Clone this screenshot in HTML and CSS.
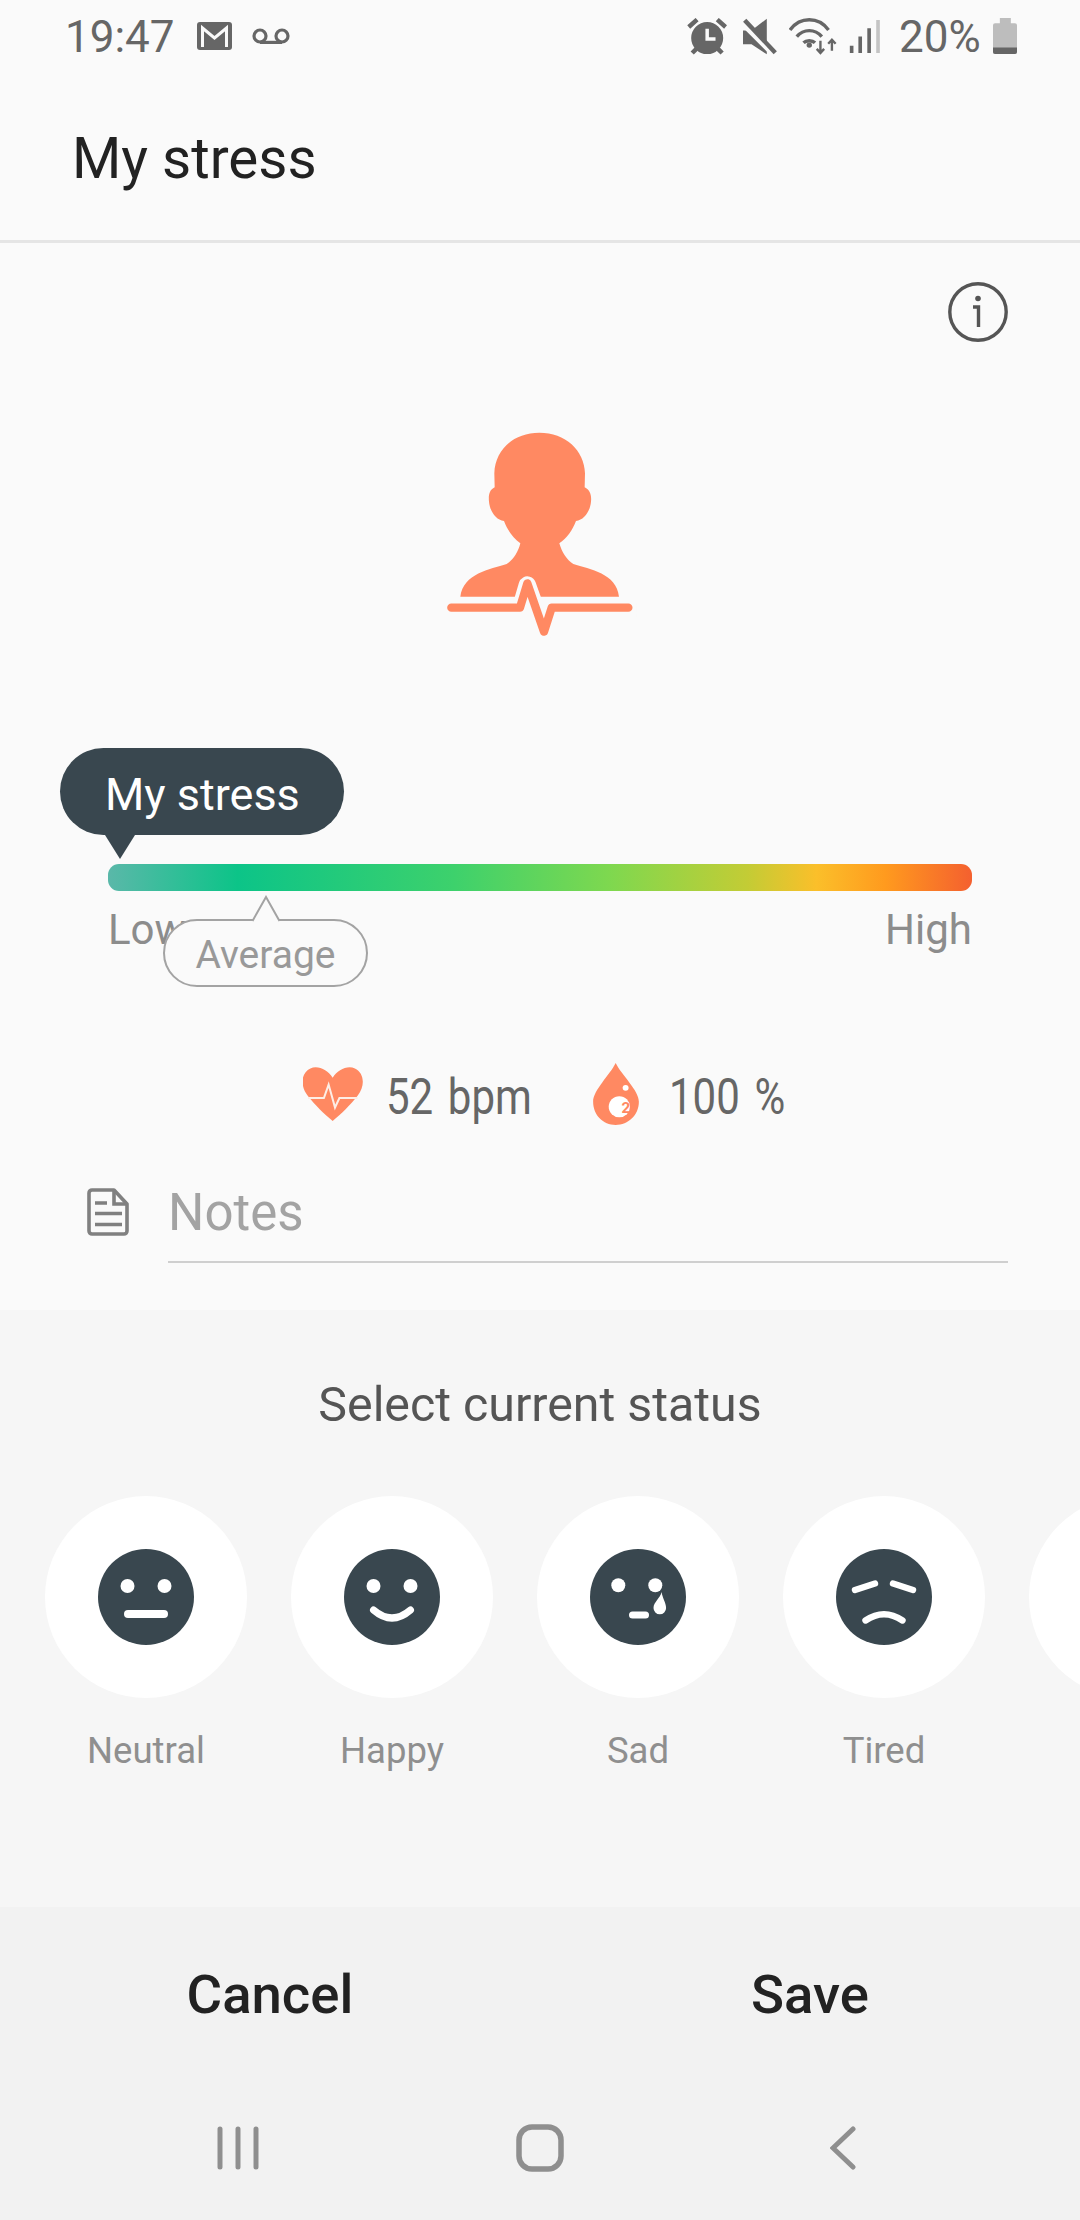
FILE: index.html
```html
<!DOCTYPE html>
<html lang="en">
<head>
<meta charset="utf-8">
<title>My stress</title>
<link rel="stylesheet" href="styles.css">
</head>
<body>
<div class="app">
  <header class="status">
    <span class="clock">19:47</span>
    <svg class="ic-gmail" viewBox="0 0 35 28"><rect width="35" height="28" rx="3" fill="#666"/><path d="M5.5 25V6l12 10 12-10v19" fill="none" stroke="#fafafa" stroke-width="3"/></svg>
    <svg class="ic-vm" viewBox="0 0 38 16"><circle cx="8" cy="8" r="6" fill="none" stroke="#666" stroke-width="3.2"/><circle cx="30" cy="8" r="6" fill="none" stroke="#666" stroke-width="3.2"/><path d="M8 14.4h22" stroke="#666" stroke-width="3.2"/></svg>
    <span class="status-gap"></span>
    <svg class="ic-alarm" viewBox="140 55 115 105"><circle cx="198" cy="112" r="46" fill="#666"/><path d="M145 80l24-21M251 80l-24-21M155 155l12-12M241 155l-12-12" stroke="#666" stroke-width="13"/><path d="M198 85v30h24" fill="none" stroke="#fafafa" stroke-width="10"/></svg>
    <svg class="ic-mute" viewBox="305 55 100 105"><path d="M305 90h25l45-35v105l-45-30h-25z" fill="#666"/><path d="M300 67l90 90" stroke="#fafafa" stroke-width="14"/><path d="M310 60l90 95" stroke="#666" stroke-width="13"/></svg>
    <svg class="ic-wifi" viewBox="445 50 145 115"><g fill="none" stroke="#666" stroke-width="10"><path d="M448 88c30-40 84-40 114 0"/><path d="M468 108c20-24 54-24 74 0"/><path d="M488 126c8-8 26-8 34 0"/></g><circle cx="505" cy="133" r="8" fill="#666"/><path d="M538 120v35M527 144l11 12 11-12M572 150v-32M561 129l11-12 11 12" fill="none" stroke="#666" stroke-width="7"/></svg>
    <svg class="ic-signal" viewBox="625 60 93 100"><rect x="627" y="138" width="11" height="22" fill="#666"/><rect x="653" y="110" width="11" height="50" fill="#666"/><rect x="680" y="85" width="11" height="75" fill="#666"/><rect x="707" y="60" width="11" height="100" fill="#c4c4c4"/></svg>
    <span class="pct">20%</span>
    <svg class="ic-batt" viewBox="1060 55 70 105"><rect x="1080" y="55" width="32" height="20" fill="#bdbdbd"/><rect x="1060" y="70" width="70" height="90" rx="6" fill="#bdbdbd"/><path d="M1060 141h70v13a6 6 0 0 1-6 6h-58a6 6 0 0 1-6-6z" fill="#666"/></svg>
  </header>

  <div class="appbar"><h1 class="title">My stress</h1></div>

  <main class="main">
    <div class="info-row">
      <svg class="ic-info" viewBox="0 0 60 60"><circle cx="30" cy="30" r="28.2" fill="none" stroke="#555" stroke-width="3.4"/><circle cx="30" cy="16.5" r="2.8" fill="#555"/><path d="M25 25h5.5v20" fill="none" stroke="#555" stroke-width="3.4"/></svg>
    </div>

    <div class="hero">
      <svg class="ic-person" viewBox="0 0 720 720">
        <path d="M358 68C280 68 225 120 223 190l1 42c-16 8-19 23-17 43 3 30 21 55 45 58 10 27 28 52 49 67-6 25-21 50-41 62-50 16-130 28-139 98h476c-7-70-87-82-137-98-20-12-35-37-42-62 22-15 40-40 50-67 24-3 42-28 45-58 2-20-3-35-19-43l1-42C493 120 436 68 358 68z" fill="#ff8962"/>
        <path d="M70 600H300L322 525 372 665 395 600H650" fill="none" stroke="#fafafa" stroke-width="52" stroke-linejoin="round"/>
        <path d="M94 593H300L322 520 372 665 395 593H625" fill="none" stroke="#ff8962" stroke-width="25" stroke-linecap="round" stroke-linejoin="round"/>
      </svg>
    </div>

    <section class="scale">
      <div class="bar"></div>
      <div class="scale-labels"><span>Low</span><span>High</span></div>
      <div class="tip-mine">My stress</div>
      <div class="tip-avg">
        <svg class="tip-avg-arrow" viewBox="0 0 30 28"><path d="M1.500 26L15 2l13.500 24" fill="#fafafa" stroke="#a3a3a3" stroke-width="2"/></svg>
        Average
      </div>
    </section>

    <div class="stats">
      <svg class="ic-heart" viewBox="70 80 178 160"><path d="M158 112c-14-24-44-38-66-28C65 96 60 135 84 165c20 26 50 55 74 75 24-20 54-49 74-75 24-30 19-69-8-81-22-10-52 4-66 28z" fill="#ff8962"/><path d="M85 172h47l14-40 19 68 13-28h54" fill="none" stroke="#fdeee6" stroke-width="6"/></svg>
      <span class="stat-text stat-bpm"><span class="squeeze">52 bpm</span></span>
      <svg class="ic-drop" viewBox="935 68 138 187"><path d="M1003 68c-18 37-68 82-68 117 0 40 30 70 68 70s70-30 70-70c0-35-52-80-70-117z" fill="#ff8962"/><circle cx="1014" cy="200" r="32" fill="#fff"/><circle cx="1033" cy="143" r="9" fill="#fff"/><text class="o2" x="1034" y="218">2</text></svg>
      <span class="stat-text stat-o2"><span class="squeeze">100 %</span></span>
    </div>

    <div class="notes">
      <svg class="ic-note" viewBox="0 0 42 48"><path d="M2 5a3 3 0 0 1 3-3h22l13 14v27a3 3 0 0 1-3 3H5a3 3 0 0 1-3-3z" fill="none" stroke="#808080" stroke-width="3.6" stroke-linejoin="round"/><path d="M27 2v14h13" fill="none" stroke="#808080" stroke-width="3.6"/><path d="M8 15h12M8 25.500h27M8 36.500h27" stroke="#808080" stroke-width="3.4"/></svg>
      <div class="notes-field">Notes</div>
    </div>
  </main>

  <section class="picker">
    <h2 class="picker-title">Select current status</h2>
    <div class="moods">
      <div class="mood">
        <div class="mood-circle"><svg class="face" viewBox="0 0 96 96"><circle cx="48" cy="48" r="48" fill="#39474f"/><circle cx="29.500" cy="37" r="7" fill="#fff"/><circle cx="66.500" cy="37" r="7" fill="#fff"/><path d="M30 65h36" stroke="#fff" stroke-width="8" stroke-linecap="round"/></svg></div>
        <span class="mood-label">Neutral</span>
      </div>
      <div class="mood">
        <div class="mood-circle"><svg class="face" viewBox="0 0 96 96"><circle cx="48" cy="48" r="48" fill="#39474f"/><circle cx="29.500" cy="37" r="7" fill="#fff"/><circle cx="66.500" cy="37" r="7" fill="#fff"/><path d="M29.500 61Q48 77 66.500 61" fill="none" stroke="#fff" stroke-width="7" stroke-linecap="round"/></svg></div>
        <span class="mood-label">Happy</span>
      </div>
      <div class="mood">
        <div class="mood-circle"><svg class="face" viewBox="0 0 96 96"><circle cx="48" cy="48" r="48" fill="#39474f"/><circle cx="28.300" cy="36.300" r="7" fill="#fff"/><circle cx="65.300" cy="36.300" r="7" fill="#fff"/><path d="M71.500 43c-1 6-8 10-8 16a6.300 6.300 0 0 0 12.600 0c0-5-3.600-10-4.600-16z" fill="#fff"/><path d="M42.500 66h13" stroke="#fff" stroke-width="7" stroke-linecap="round"/></svg></div>
        <span class="mood-label">Sad</span>
      </div>
      <div class="mood">
        <div class="mood-circle"><svg class="face" viewBox="0 0 96 96"><circle cx="48" cy="48" r="48" fill="#39474f"/><path d="M19 41l20-6.500M57 34.500l20 6.500M29.500 71.500Q48 59 66.500 71.500" fill="none" stroke="#fff" stroke-width="6.400" stroke-linecap="round"/></svg></div>
        <span class="mood-label">Tired</span>
      </div>
      <div class="mood">
        <div class="mood-circle"></div>
      </div>
    </div>
  </section>

  <footer class="footer">
    <div class="actions">
      <button class="action">Cancel</button>
      <button class="action">Save</button>
    </div>
    <nav class="nav">
      <svg class="nav-recent" viewBox="0 0 42 44"><path d="M3 3v38M21 3v38M39 3v38" stroke="#8f8f8f" stroke-width="5" stroke-linecap="round"/></svg>
      <svg class="nav-home" viewBox="0 0 48 48"><rect x="3" y="3" width="42" height="42" rx="13" fill="none" stroke="#8f8f8f" stroke-width="5.500"/></svg>
      <svg class="nav-back" viewBox="0 0 26 44"><path d="M23 3L3 22l20 19" fill="none" stroke="#8f8f8f" stroke-width="5" stroke-linecap="round"/></svg>
    </nav>
  </footer>
</div>
</body>
</html>
```

FILE: styles.css
```css
* { box-sizing: border-box; }
html, body { margin: 0; padding: 0; }
body { font-family: Roboto, "Noto Sans", sans-serif; background: #fafafa; }

.app { width: 1080px; height: 2220px; display: flex; flex-direction: column; overflow: hidden; background: #fafafa; }

/* status bar */
.status { height: 72px; flex: none; display: flex; align-items: center; padding: 0 63px 0 65px; color: #666; font-size: 44px; }
.status svg { flex: none; display: block; }
.clock { width: 109px; padding-top: 2px; }
.ic-gmail { width: 35px; height: 28px; margin-left: 23px; }
.ic-vm { width: 38px; height: 16px; margin-left: 20px; }
.status-gap { flex: 1; }
.ic-alarm { width: 40px; height: 37px; }
.ic-mute { width: 34px; height: 37px; margin-left: 16px; }
.ic-wifi { width: 49px; height: 39px; margin-left: 12px; }
.ic-signal { width: 31px; height: 33px; margin-left: 11px; }
.pct { margin-left: 19px; font-size: 44px; width: 82px; padding-top: 2px; }
.ic-batt { width: 24px; height: 36px; margin-left: 12px; }

/* app bar */
.appbar { height: 171px; flex: none; display: flex; align-items: center; padding: 6px 0 0 72px; border-bottom: 3px solid #e5e5e5; }
.title { margin: 0; font-size: 56.5px; font-weight: 400; color: #222; line-height: 64px; }

/* main */
.main { height: 1067px; flex: none; display: flex; flex-direction: column; }
.info-row { display: flex; justify-content: flex-end; padding: 39px 72px 0 0; }
.ic-info { width: 60px; height: 60px; display: block; }
.hero { margin-top: 68px; height: 240px; display: flex; justify-content: center; }
.ic-person { width: 240px; height: 240px; display: block; }

/* scale */
.scale { position: relative; margin: 214px 108px 0; }
.bar { height: 27px; border-radius: 11px; background: linear-gradient(90deg, #5ab8a9 0%, #0cc488 15%, #3dd16c 40%, #7ed84f 58%, #c3cc35 74%, #fbbf2a 82%, #ff9a1e 90%, #f4602f 100%); }
.scale-labels { display: flex; justify-content: space-between; margin-top: 14px; font-size: 42px; line-height: 50px; color: #8c8c8c; }

.tip-mine { position: absolute; left: -48px; top: -116px; width: 284px; height: 87px; border-radius: 44px; background: #39474f; color: #fff; font-size: 45px; line-height: 94px; padding-left: 45px; }
.tip-mine::after { content: ""; position: absolute; left: 45px; top: 87px; width: 0; height: 0; border-left: 15px solid transparent; border-right: 15px solid transparent; border-top: 24px solid #39474f; }

.tip-avg { position: absolute; left: 55px; top: 55px; width: 205px; height: 68px; border: 2px solid #a3a3a3; border-radius: 34px; background: #fafafa; color: #999; font-size: 39px; line-height: 68px; text-align: center; }
.tip-avg-arrow { position: absolute; left: 86px; top: -26px; width: 30px; height: 28px; display: block; }

/* stats */
.stats { margin-top: 107px; height: 64px; display: flex; align-items: center; padding-left: 303px; color: #666; font-size: 50px; }
.ic-heart { width: 60px; height: 54px; display: block; flex: none; }
.ic-drop { width: 46px; height: 62px; display: block; flex: none; margin-left: 65px; }
.stat-text { display: block; line-height: 64px; padding-top: 5px; white-space: nowrap; }
.stat-bpm { width: 142px; margin-left: 23px; }
.stat-o2 { width: 113px; margin-left: 30px; }
.squeeze { display: inline-block; transform: scaleX(.84); transform-origin: left center; word-spacing: 5px; }
.o2 { font-size: 46px; font-weight: 700; fill: #ff8962; text-anchor: middle; }

/* notes */
.notes { margin-top: 61px; display: flex; align-items: flex-start; padding: 0 72px 0 87px; }
.ic-note { width: 42px; height: 48px; display: block; flex: none; margin-top: 1px; }
.notes-field { flex: 1; margin-left: 39px; height: 79px; border-bottom: 2px solid #cfcfcf; font-size: 51px; line-height: 58px; color: #a3a3a3; margin-top: -3px; }

/* picker */
.picker { height: 597px; flex: none; background: #f6f6f6; overflow: hidden; }
.picker-title { margin: 0; padding-top: 68px; font-size: 48.3px; line-height: 54px; font-weight: 400; color: #555; text-align: center; }
.moods { display: flex; gap: 44px; margin-top: 64px; padding-left: 45px; width: 1300px; }
.mood { width: 202px; flex: none; display: flex; flex-direction: column; align-items: center; }
.mood-circle { width: 202px; height: 202px; border-radius: 50%; background: #fff; display: flex; align-items: center; justify-content: center; }
.face { width: 96px; height: 96px; display: block; }
.mood-label { margin-top: 31px; font-size: 36.500px; line-height: 44px; color: #8f8f8f; }

/* footer */
.footer { flex: 1; background: #f2f2f2; display: flex; flex-direction: column; }
.actions { height: 172px; display: flex; padding-top: 2px; }
.action { flex: 1; border: 0; background: none; padding: 0; font: 500 54.500px/1 Roboto, sans-serif; color: #222; }
.nav { position: relative; flex: 1; display: block; }
.nav svg { display: block; position: absolute; }
.nav-recent { left: 217px; top: 47px; width: 42px; height: 44px; }
.nav-home { left: 516px; top: 45px; width: 48px; height: 48px; }
.nav-back { left: 830px; top: 47px; width: 26px; height: 44px; }
```
